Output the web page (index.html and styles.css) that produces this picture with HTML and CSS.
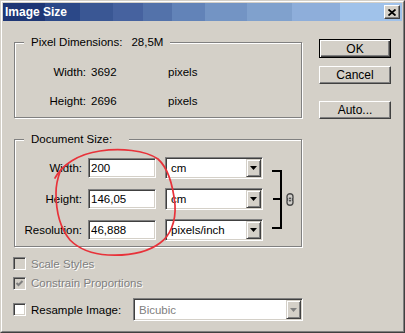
FILE: index.html
```html
<!DOCTYPE html>
<html>
<head>
<meta charset="utf-8">
<link rel="stylesheet" href="styles.css">
</head>
<body>
<div class="window">
  <div class="frame">
    <div class="titlebar">
      <span class="title">Image Size</span>
      <span class="close"><svg width="8" height="7" viewBox="0 0 8 7"><path d="M0.5 0.5L7.5 6.5M7.5 0.5L0.5 6.5" stroke="#000" stroke-width="1.8"/></svg></span>
    </div>
    <div class="body">
      <div class="left">
        <fieldset class="group g1">
          <legend class="lg1">Pixel Dimensions:<span class="lgval">28,5M</span></legend>
          <div class="pxgrid">
            <span class="lbl">Width:</span><span>3692</span><span>pixels</span>
            <span class="lbl">Height:</span><span>2696</span><span>pixels</span>
          </div>
        </fieldset>
        <fieldset class="group g2">
          <legend class="lg2">Document Size:</legend>
          <div class="docgrid">
            <span class="lbl">Width:</span>
            <input class="field" type="text" value="200">
            <div class="select"><span class="val">cm</span><span class="arrow"><svg width="7" height="4" viewBox="0 0 7 4"><path d="M0 0H7L3.5 4Z" fill="#000"/></svg></span></div>
            <span class="lbl">Height:</span>
            <input class="field" type="text" value="146,05">
            <div class="select"><span class="val">cm</span><span class="arrow"><svg width="7" height="4" viewBox="0 0 7 4"><path d="M0 0H7L3.5 4Z" fill="#000"/></svg></span></div>
            <span class="lbl">Resolution:</span>
            <input class="field" type="text" value="46,888">
            <div class="select"><span class="val">pixels/inch</span><span class="arrow"><svg width="7" height="4" viewBox="0 0 7 4"><path d="M0 0H7L3.5 4Z" fill="#000"/></svg></span></div>
            <svg class="bracket" width="12" height="75" viewBox="0 0 12 75"><path d="M1 14H10V71H1M2 42H10" stroke="#000" stroke-width="2" fill="none"/></svg>
            <svg class="link" width="8" height="13" viewBox="0 0 8 13"><rect x="1" y="0.7" width="6" height="7" rx="3" fill="none" stroke="#4a4a4a" stroke-width="1.4"/><rect x="1" y="5.3" width="6" height="7" rx="3" fill="none" stroke="#4a4a4a" stroke-width="1.4"/><rect x="2.6" y="2.4" width="2.8" height="8.2" rx="1.4" fill="none" stroke="#c8c8c8" stroke-width="0.9"/></svg>
          </div>
        </fieldset>
        <div class="checks">
          <div class="chk r1"><span class="box dis"></span><span class="dtext">Scale Styles</span></div>
          <div class="chk r2"><span class="box dis"><svg width="9" height="9" viewBox="0 0 9 9"><path d="M1.5 4L3.5 6L7.5 2" stroke="#808080" stroke-width="2" fill="none"/></svg></span><span class="dtext">Constrain Proportions</span></div>
          <div class="chk r3"><span class="box"></span><span>Resample Image:</span>
            <div class="select wide"><span class="val dval">Bicubic</span><span class="arrow"><svg width="7" height="4" viewBox="0 0 7 4"><path d="M0 0H7L3.5 4Z" fill="#808080"/></svg></span></div>
          </div>
        </div>
      </div>
      <div class="right">
        <div class="btn default">OK</div>
        <div class="btn cancel">Cancel</div>
        <div class="btn auto">Auto...</div>
      </div>
    </div>
  </div>
  <svg class="scribble" width="405" height="333" viewBox="0 0 405 333"><path d="M55 178 C 62 165, 78 154, 100 151 C 120 148, 145 150, 158 159 C 168 168, 173 185, 175 205 C 176 222, 170 236, 160 243 C 148 252, 130 256, 108 255 C 90 254, 78 248, 70 240 C 60 228, 56 210, 56 193 C 56 185, 57 180, 60 172" fill="none" stroke="#e8323a" stroke-width="1.7" stroke-linecap="round"/></svg>
</div>
</body>
</html>
```

FILE: styles.css
```css
body {
  margin: 0;
  background: #d4d0c8;
  font-family: "Liberation Sans", Arial, sans-serif;
  font-size: 11.5px;
  color: #000;
}
.window {
  position: relative;
  width: 405px;
  height: 333px;
  box-sizing: border-box;
  border: 1px solid;
  border-color: #d4d0c8 #404040 #404040 #d4d0c8;
  background: #d4d0c8;
  overflow: hidden;
}
.frame {
  height: 100%;
  box-sizing: border-box;
  border: 1px solid;
  border-color: #fff #808080 #808080 #fff;
  padding: 1px;
  display: flex;
  flex-direction: column;
}
.titlebar {
  height: 18px;
  flex: none;
  display: flex;
  align-items: center;
  justify-content: space-between;
  padding: 0 2px;
  background: linear-gradient(to right,
    #1e3675 0 42px, #2b4888 42px 77px, #3a5794 77px 110px, #46629f 110px 140px,
    #5372aa 140px 169px, #6283b8 169px 202px, #7394c4 202px 244px, #80a1cd 244px 289px,
    #8eaeda 289px 337px, #a0c2ea 337px);
}
.title {
  color: #fff;
  font-weight: bold;
  font-size: 12px;
}
.close {
  width: 16px;
  height: 14px;
  box-sizing: border-box;
  background: #d4d0c8;
  border: 1px solid;
  border-color: #fff #404040 #404040 #fff;
  box-shadow: inset -1px -1px 0 #808080;
  display: flex;
  align-items: center;
  justify-content: center;
}
.body {
  flex: 1;
  display: flex;
  gap: 16px;
  padding: 15px 0 0 11px;
}
.left {
  width: 289px;
  flex: none;
}
.group {
  margin: 0;
  min-inline-size: 0;
  width: 288px;
  box-sizing: border-box;
  border: 1px solid #808080;
  box-shadow: inset 1px 1px 0 #fff, 1px 1px 0 #fff;
}
.group legend {
  margin-left: 9px;
  line-height: 13px;
  background: #d4d0c8;
}
.lg1 { padding: 0 7px; }
.lg2 { padding: 0 17px 0 7px; }
.lgval { margin-left: 9px; }
.g1 { padding: 8px 0 2px; }
.g2 { margin-top: 15px; padding: 11px 0 5px; }
.pxgrid {
  display: grid;
  grid-template-columns: 76px 77px auto;
  grid-auto-rows: 29px;
  align-items: center;
}
.lbl {
  text-align: right;
  padding-right: 5px;
}
.docgrid {
  display: grid;
  grid-template-columns: 73px 77px 106px 15px 8px;
  grid-template-rows: 22px 22px 22px;
  row-gap: 9px;
  align-items: center;
}
.docgrid .lbl { padding-right: 6px; }
.field {
  width: 68px;
  height: 20px;
  box-sizing: border-box;
  margin: 0;
  padding: 0 2px;
  font: inherit;
  color: #000;
  background: #fff;
  border: 1px solid;
  border-color: #808080 #fff #fff #808080;
  box-shadow: inset 1px 1px 0 #404040, inset -1px -1px 0 #d4d0c8;
  outline: none;
}
.select {
  width: 98px;
  height: 22px;
  box-sizing: border-box;
  background: #fff;
  border: 1px solid;
  border-color: #808080 #fff #fff #808080;
  box-shadow: inset 1px 1px 0 #404040, inset -1px -1px 0 #d4d0c8;
  display: flex;
  align-items: center;
}
.select .val {
  flex: 1;
  padding-left: 5px;
}
.arrow {
  width: 15px;
  height: 18px;
  box-sizing: border-box;
  margin-right: 1px;
  background: #d4d0c8;
  border: 1px solid;
  border-color: #d4d0c8 #404040 #404040 #d4d0c8;
  box-shadow: inset 1px 1px 0 #fff, inset -1px -1px 0 #808080;
  display: flex;
  align-items: center;
  justify-content: center;
}
.bracket {
  grid-column: 4;
  grid-row: 1 / 4;
  align-self: start;
}
.link {
  grid-column: 5;
  grid-row: 1 / 4;
}
.checks {
  margin-top: 7px;
  display: flex;
  flex-direction: column;
}
.chk {
  display: flex;
  align-items: center;
}
.r1 { height: 19px; }
.r2 { height: 20px; }
.r3 { height: 23px; margin-top: 5px; }
.box {
  width: 13px;
  height: 13px;
  box-sizing: border-box;
  margin-left: -1px;
  margin-right: 5px;
  background: #fff;
  border: 1px solid;
  border-color: #808080 #fff #fff #808080;
  box-shadow: inset 1px 1px 0 #404040, inset -1px -1px 0 #d4d0c8;
  display: flex;
  align-items: center;
  justify-content: center;
}
.box.dis { background: #d4d0c8; }
.dtext, .dval {
  color: #808080;
  text-shadow: 1px 1px 0 #fff;
}
.dval { text-shadow: none; }
.select.wide {
  width: 170px;
  height: 23px;
  margin-left: auto;
}
.select.wide .arrow {
  height: 19px;
}
.right {
  width: 72px;
  flex: none;
  display: flex;
  flex-direction: column;
  padding-top: 3px;
}
.btn {
  width: 72px;
  height: 18px;
  box-sizing: border-box;
  border: 1px solid;
  border-color: #fff #404040 #404040 #fff;
  box-shadow: inset -1px -1px 0 #808080;
  display: flex;
  align-items: center;
  justify-content: center;
  font-size: 12px;
}
.btn.default {
  height: 19px;
  border: 1px solid #000;
  box-shadow: inset 1px 1px 0 #fff, inset -1px -1px 0 #404040, inset -2px -2px 0 #808080;
}
.cancel { margin-top: 8px; }
.auto { margin-top: 17px; }
.scribble {
  position: absolute;
  left: -1px;
  top: -1px;
  pointer-events: none;
}
```
